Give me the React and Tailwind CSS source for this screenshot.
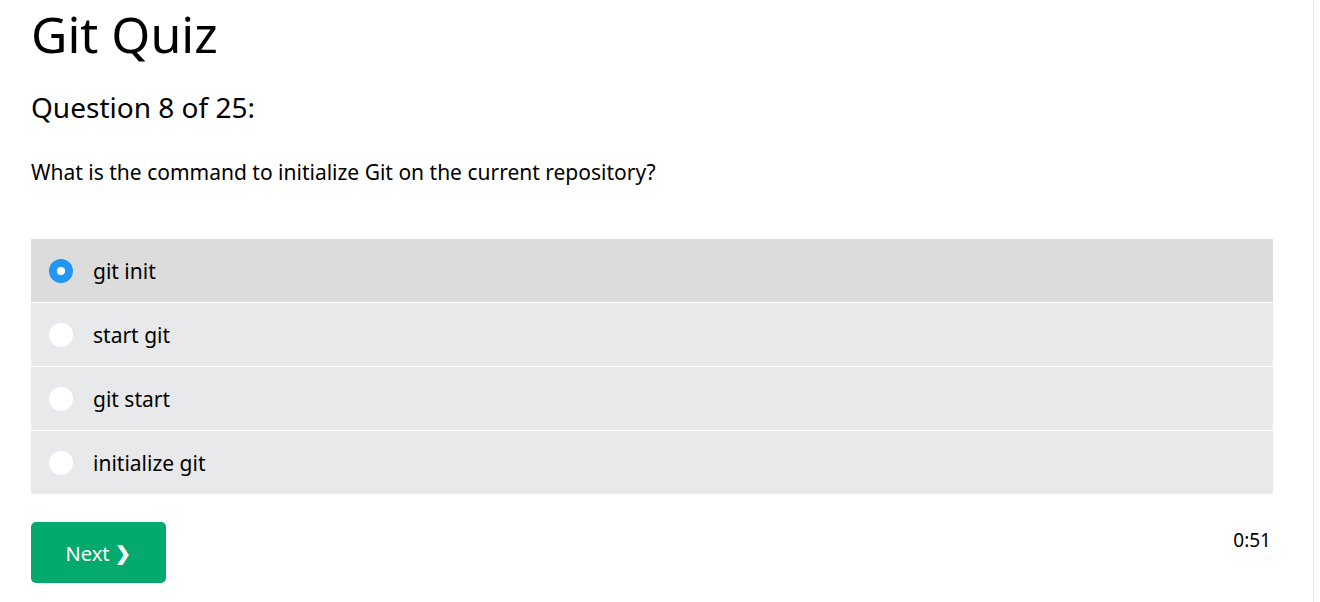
import React, { useState } from 'react';

const options = ['git init', 'start git', 'git start', 'initialize git'];

export default function App() {
  const [selected, setSelected] = useState(0);

  return (
    <div className="min-h-screen bg-white flex" style={{ fontFamily: '"Noto Sans", "Open Sans", sans-serif' }}>
      <div className="flex-1 pl-[31px] pr-[40px] text-black">
        <h1 className="text-[50px] leading-[64px] mt-[2px]">Git Quiz</h1>
        <h3 className="text-[28px] leading-[36px] mt-[23px]">Question 8 of 25:</h3>
        <p className="text-[21px] leading-[28px] mt-[33px]">What is the command to initialize Git on the current repository?</p>
        <div className="mt-[53px] flex flex-col gap-px">
          {options.map((opt, i) => (
            <label
              key={opt}
              onClick={() => setSelected(i)}
              className={`h-[63px] flex items-center pl-[18px] cursor-pointer ${selected === i ? 'bg-[#dcdcdc]' : 'bg-[#e8e9eb]'}`}
            >
              <span
                className={`w-6 h-6 rounded-full flex items-center justify-center ${selected === i ? 'bg-[#2196f3]' : 'bg-white'}`}
              >
                {selected === i && <span className="w-2 h-2 rounded-full bg-white" />}
              </span>
              <span className="ml-[20px] text-[21px] pt-[3px]">{opt}</span>
            </label>
          ))}
        </div>
        <div className="flex justify-between items-start mt-[28px]">
          <button className="w-[135px] h-[61px] rounded-[5px] bg-[#04aa6d] text-white text-[20px] flex items-center justify-center gap-1.5 pt-[2px]">
            Next <span className="font-bold text-[19px]">❯</span>
          </button>
          <span className="text-[19px] mt-[4px] mr-[2px]">0:51</span>
        </div>
      </div>
      <div className="w-[7px] border-l border-[#ececec] bg-white" />
    </div>
  );
}
